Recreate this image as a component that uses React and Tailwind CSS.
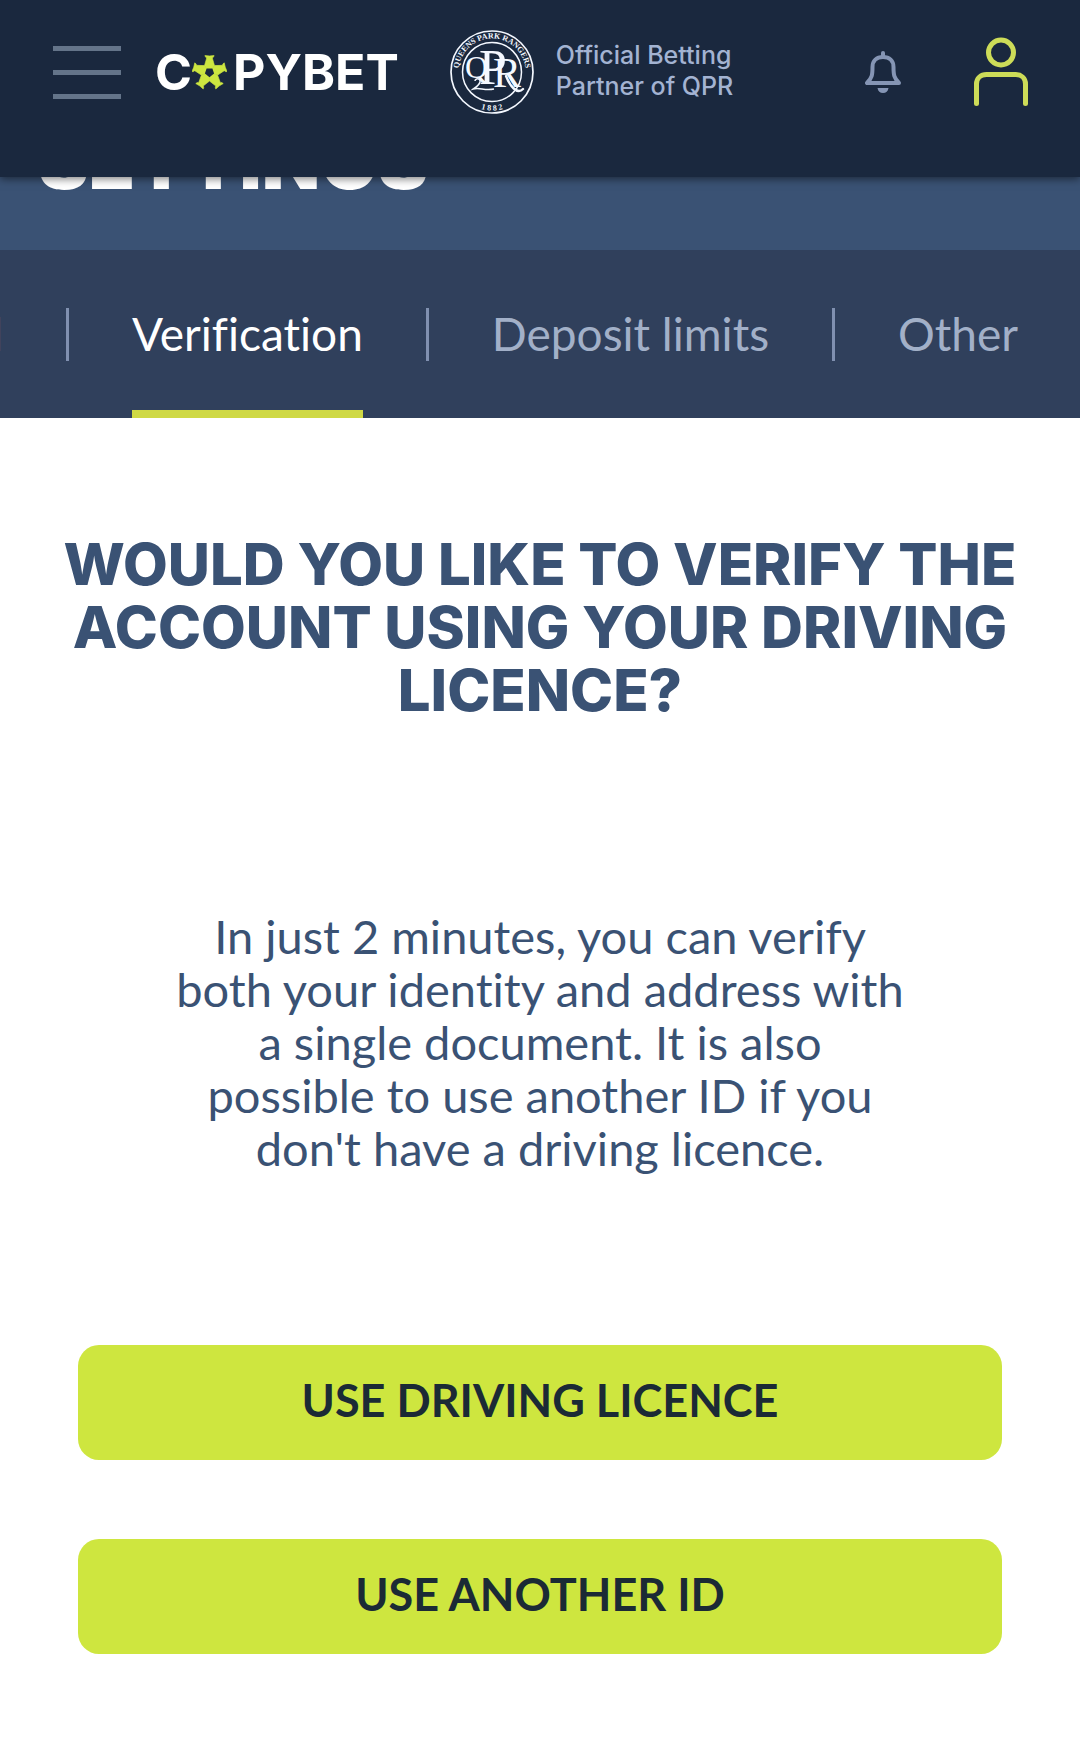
import React, { useState } from 'react';

const tabs = ['Personal', 'Verification', 'Deposit limits', 'Other'];

const StarBall = () => (
  <svg className="h-[35px] w-[35px]" viewBox="-17.5 -17.5 35 35" aria-hidden="true">
    <g fill="#cde640" stroke="#cde640" strokeWidth="0.6">
      {[0, 72, 144, 216, 288].map((angle) => (
        <path
          key={angle}
          transform={`rotate(${angle})`}
          d="M-4.6 -17Q0 -16.2 4.6 -17L4 -15.4L2.8 -14.6L5 -6.9L0 0.5L-5 -6.9L-2.8 -14.6L-4 -15.4Z"
        />
      ))}
    </g>
    <path d="M-2.9 -4H2.9L4.6 1L0 4.8L-4.6 1Z" fill="#1a283e" />
  </svg>
);

const Logo = () => (
  <a href="#" aria-label="Copybet" className="flex items-center gap-[6px] font-['Inter',sans-serif] text-[50px] leading-none font-bold text-white">
    <span className="flex items-center">
      C
      <StarBall />
    </span>
    <span>PYBET</span>
  </a>
);

const ClubBadge = () => (
  <svg className="h-[84px] w-[84px] shrink-0" viewBox="0 0 84 84" fill="none" stroke="#f4f8ff" role="img" aria-label="Queens Park Rangers 1882">
    <defs>
      <path id="badge-top" d="M9.5 50A33.5 33.5 0 1 1 74.5 50" />
      <path id="badge-bottom" d="M10 63.500A38.500 38.500 0 0 0 74 63.500" />
    </defs>
    <circle cx="42" cy="42" r="41" strokeWidth="1.7" />
    <circle cx="42" cy="42" r="29.5" strokeWidth="1.5" />
    <g fill="#f4f8ff" stroke="none" className="font-['Liberation_Serif',serif]">
      <text fontSize="8" fontWeight="700" textAnchor="middle">
        <textPath href="#badge-top" startOffset="50%">QUEENS PARK RANGERS</textPath>
      </text>
      <text fontSize="8" fontWeight="700" textAnchor="middle">
        <textPath href="#badge-bottom" startOffset="50%">1 8 8 2</textPath>
      </text>
      <text y="48 54 57" x="15 29 43">
        <tspan fontSize="32">Q</tspan>
        <tspan fontSize="50">P</tspan>
        <tspan fontSize="42">R</tspan>
      </text>
    </g>
    <path d="M25 51C25 48 31 48 30 52C29 56 24 58 23 59C30 57 34 61 44 59" strokeWidth="1.5" />
    <path d="M56 46C60 56 67 65 73 59" strokeWidth="2.4" strokeLinecap="round" />
  </svg>
);

const BellIcon = () => (
  <svg className="h-[42px] w-[36px]" viewBox="0 0 36 42" fill="none" stroke="#8595b4" strokeWidth="4" strokeLinejoin="round" aria-hidden="true">
    <path d="M18 6C11.500 6 7.500 10 7.500 16C7.500 24 7 27 2 32H34C29 27 28.500 24 28.500 16C28.500 10 24.500 6 18 6Z" />
    <path d="M18 2V6" strokeLinecap="round" />
    <path d="M12.500 37H23.500C23 40.500 21 42 18 42C15 42 13 40.500 12.500 37Z" fill="#8595b4" stroke="none" />
  </svg>
);

const UserIcon = () => (
  <svg className="h-[70px] w-[54px]" viewBox="0 0 54 70" fill="none" stroke="#cddc58" strokeWidth="5" strokeLinecap="round" aria-hidden="true">
    <circle cx="27" cy="15.500" r="12.500" />
    <path d="M2.500 66.500V47C2.500 41 7 37.500 12.500 37.500H41.500C47 37.500 51.500 41 51.500 47V66.500" />
  </svg>
);

const Header = () => (
  <header className="sticky top-0 z-10 bg-[#1a283e] pb-[33px] shadow-[0_2px_8px_rgba(0,0,0,0.5)]">
    <div className="flex h-36 items-center pr-[52px] pl-[53px]">
      <button aria-label="Menu" className="flex w-[68px] shrink-0 flex-col gap-[19px]">
        <span className="h-[5px] bg-[#647489]" />
        <span className="h-[5px] bg-[#647489]" />
        <span className="h-[5px] bg-[#647489]" />
      </button>
      <div className="ml-[34px]">
        <Logo />
      </div>
      <div className="ml-[51px] flex items-center gap-[22px]">
        <ClubBadge />
        <p className="pb-[2px] font-['Inter',sans-serif] text-[25px] leading-[31px] font-medium whitespace-nowrap text-[#a3b3d2]">
          Official Betting
          <br />
          Partner of QPR
        </p>
      </div>
      <div className="ml-auto flex items-center gap-[73px]">
        <button aria-label="Notifications"><BellIcon /></button>
        <button aria-label="Account"><UserIcon /></button>
      </div>
    </div>
  </header>
);

const Tabs = () => {
  const [active, setActive] = useState('Verification');

  return (
    <nav className="flex h-[168px] items-stretch justify-end gap-[63px] overflow-hidden bg-[#30405c] pr-[62px] text-[46px]">
      {tabs.map((tab, i) => (
        <React.Fragment key={tab}>
          {i > 0 && <span className="h-[53px] w-[3px] shrink-0 self-center bg-[#8090b0]" />}
          <button
            onClick={() => setActive(tab)}
            className={`shrink-0 border-y-8 border-t-transparent pb-[2px] whitespace-nowrap ${
              tab === active ? 'border-b-[#cfd945] text-white' : 'border-b-transparent text-[#a2b0c8]'
            }`}
          >
            {tab}
          </button>
        </React.Fragment>
      ))}
    </nav>
  );
};

const PrimaryButton = ({ children }) => (
  <button className="h-[115px] w-full rounded-[21px] bg-[#cee63f] pb-1 text-[45px] font-bold text-[#1b2a35]">
    {children}
  </button>
);

export default function App() {
  return (
    <div className="min-h-screen bg-white font-['Lato',sans-serif] [font-variant-ligatures:none]">
      <Header />
      <div className="flex h-[73px] flex-col justify-end overflow-hidden bg-[#3a5274] pb-[49px] pl-[38px]">
        <h1 className="font-['Inter',sans-serif] text-[76px] leading-[80px] font-black text-white">SETTINGS</h1>
      </div>
      <Tabs />
      <main className="px-[78px] pt-[115px] pb-[89px] text-center text-[#3a5274]">
        <h2 className="-mx-8 font-['Inter',sans-serif] text-[58px] leading-[63px] font-extrabold">
          WOULD YOU LIKE TO VERIFY THE
          <br />
          ACCOUNT USING YOUR DRIVING
          <br />
          LICENCE?
        </h2>
        <p className="mt-[188px] text-[47px] leading-[53px]">
          In just 2 minutes, you can verify
          <br />
          both your identity and address with
          <br />
          a single document. It is also
          <br />
          possible to use another ID if you
          <br />
          don't have a driving licence.
        </p>
        <div className="mt-[170px] flex flex-col gap-[79px]">
          <PrimaryButton>USE DRIVING LICENCE</PrimaryButton>
          <PrimaryButton>USE ANOTHER ID</PrimaryButton>
        </div>
      </main>
    </div>
  );
}
